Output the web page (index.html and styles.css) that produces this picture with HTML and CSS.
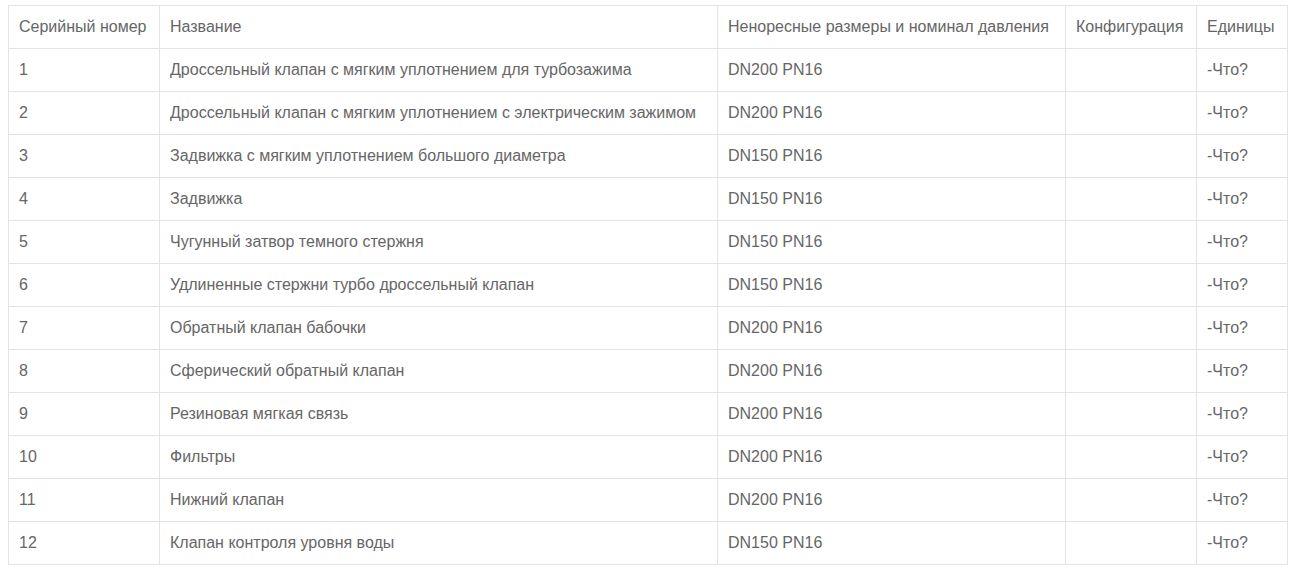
FILE: index.html
```html
<!DOCTYPE html>
<html lang="ru">
<head>
<meta charset="utf-8">
<title>Таблица</title>
<link rel="stylesheet" href="styles.css">
</head>
<body>
<table class="spec">
<colgroup>
<col class="c1"><col class="c2"><col class="c3"><col class="c4"><col class="c5">
</colgroup>
<thead>
<tr><td>Серийный номер</td><td>Название</td><td>Ненoресные размеры и номинал давления</td><td>Конфигурация</td><td>Единицы</td></tr>
</thead>
<tbody>
<tr><td>1</td><td>Дроссельный клапан с мягким уплотнением для турбозажима</td><td>DN200 PN16</td><td></td><td>-Что?</td></tr>
<tr><td>2</td><td>Дроссельный клапан с мягким уплотнением с электрическим зажимом</td><td>DN200 PN16</td><td></td><td>-Что?</td></tr>
<tr><td>3</td><td>Задвижка с мягким уплотнением большого диаметра</td><td>DN150 PN16</td><td></td><td>-Что?</td></tr>
<tr><td>4</td><td>Задвижка</td><td>DN150 PN16</td><td></td><td>-Что?</td></tr>
<tr><td>5</td><td>Чугунный затвор темного стержня</td><td>DN150 PN16</td><td></td><td>-Что?</td></tr>
<tr><td>6</td><td>Удлиненные стержни турбо дроссельный клапан</td><td>DN150 PN16</td><td></td><td>-Что?</td></tr>
<tr><td>7</td><td>Обратный клапан бабочки</td><td>DN200 PN16</td><td></td><td>-Что?</td></tr>
<tr><td>8</td><td>Сферический обратный клапан</td><td>DN200 PN16</td><td></td><td>-Что?</td></tr>
<tr><td>9</td><td>Резиновая мягкая связь</td><td>DN200 PN16</td><td></td><td>-Что?</td></tr>
<tr><td>10</td><td>Фильтры</td><td>DN200 PN16</td><td></td><td>-Что?</td></tr>
<tr><td>11</td><td>Нижний клапан</td><td>DN200 PN16</td><td></td><td>-Что?</td></tr>
<tr><td>12</td><td>Клапан контроля уровня воды</td><td>DN150 PN16</td><td></td><td>-Что?</td></tr>
</tbody>
</table>
</body>
</html>
```
FILE: styles.css
```css
html, body {
  background: #fff;
}
body {
  margin: 5px 6px 0 8px;
  font-family: "Liberation Sans", Arial, sans-serif;
  font-size: 16px;
  color: #666;
}
.spec {
  width: 100%;
  border-collapse: collapse;
  table-layout: fixed;
}
.spec td {
  border: 1px solid #e3e3e3;
  padding: 10px;
  line-height: 22px;
  height: 22px;
  white-space: nowrap;
  vertical-align: middle;
  overflow: hidden;
}
.c1 { width: 151px; }
.c2 { width: 558px; }
.c3 { width: 348px; }
.c4 { width: 131px; }
```
